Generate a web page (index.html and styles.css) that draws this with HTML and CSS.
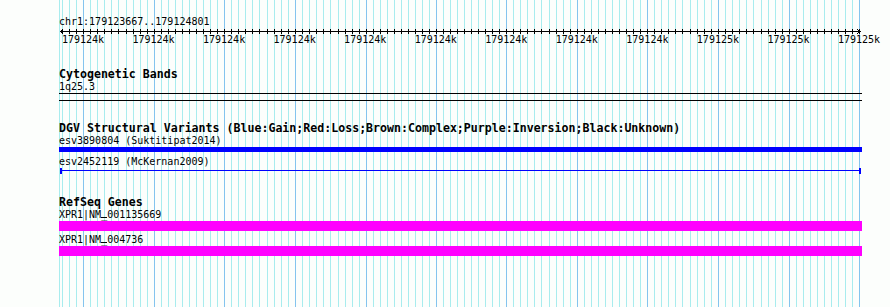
FILE: index.html
```html
<!DOCTYPE html>
<html>
<head>
<meta charset="utf-8">
<link rel="stylesheet" href="styles.css">
</head>
<body>
<div class="panel">
  <svg class="grid" width="890" height="307" viewBox="0 0 890 307" shape-rendering="crispEdges">
    <path class="grid-minor" d="M59.5 0V307M62.5 0V307M69.5 0V307M76.5 0V307M90.5 0V307M97.5 0V307M104.5 0V307M111.5 0V307M118.5 0V307M126.5 0V307M133.5 0V307M140.5 0V307M147.5 0V307M161.5 0V307M168.5 0V307M175.5 0V307M182.5 0V307M189.5 0V307M196.5 0V307M203.5 0V307M210.5 0V307M217.5 0V307M231.5 0V307M238.5 0V307M245.5 0V307M252.5 0V307M259.5 0V307M267.5 0V307M274.5 0V307M281.5 0V307M288.5 0V307M302.5 0V307M309.5 0V307M316.5 0V307M323.5 0V307M330.5 0V307M338.5 0V307M345.5 0V307M352.5 0V307M359.5 0V307M373.5 0V307M380.5 0V307M387.5 0V307M394.5 0V307M401.5 0V307M408.5 0V307M415.5 0V307M422.5 0V307M429.5 0V307M443.5 0V307M450.5 0V307M457.5 0V307M464.5 0V307M471.5 0V307M478.5 0V307M485.5 0V307M492.5 0V307M499.5 0V307M513.5 0V307M520.5 0V307M527.5 0V307M534.5 0V307M541.5 0V307M549.5 0V307M556.5 0V307M563.5 0V307M570.5 0V307M584.5 0V307M591.5 0V307M598.5 0V307M605.5 0V307M612.5 0V307M619.5 0V307M626.5 0V307M633.5 0V307M640.5 0V307M654.5 0V307M661.5 0V307M668.5 0V307M675.5 0V307M682.5 0V307M690.5 0V307M697.5 0V307M704.5 0V307M711.5 0V307M725.5 0V307M732.5 0V307M739.5 0V307M746.5 0V307M753.5 0V307M761.5 0V307M768.5 0V307M775.5 0V307M782.5 0V307M796.5 0V307M803.5 0V307M810.5 0V307M817.5 0V307M824.5 0V307M831.5 0V307M838.5 0V307M845.5 0V307M852.5 0V307"/>
    <path class="grid-major" d="M83.5 0V307M154.5 0V307M224.5 0V307M295.5 0V307M366.5 0V307M436.5 0V307M506.5 0V307M577.5 0V307M647.5 0V307M718.5 0V307M789.5 0V307M859.5 0V307"/>
  </svg>

  <div class="tracks">
    <div class="text coord">chr1:179123667..179124801</div>
    <svg class="axis" width="804" height="6" viewBox="59 0 804 6" shape-rendering="crispEdges">
      <path class="axis-line" d="M60 3.5H861"/>
      <path class="axis-line" d="M60.5 3.5L63.5 1.5M60.5 3.5L63.5 5.5M860.5 3.5L857.5 1.5M860.5 3.5L857.5 5.5"/>
      <path class="axis-line" d="M62.5 1V6M69.5 1V6M76.5 1V6M83.5 1V6M90.5 1V6M97.5 1V6M104.5 1V6M111.5 1V6M118.5 1V6M126.5 1V6M133.5 1V6M140.5 1V6M147.5 1V6M154.5 1V6M161.5 1V6M168.5 1V6M175.5 1V6M182.5 1V6M189.5 1V6M196.5 1V6M203.5 1V6M210.5 1V6M217.5 1V6M224.5 1V6M231.5 1V6M238.5 1V6M245.5 1V6M252.5 1V6M259.5 1V6M267.5 1V6M274.5 1V6M281.5 1V6M288.5 1V6M295.5 1V6M302.5 1V6M309.5 1V6M316.5 1V6M323.5 1V6M330.5 1V6M338.5 1V6M345.5 1V6M352.5 1V6M359.5 1V6M366.5 1V6M373.5 1V6M380.5 1V6M387.5 1V6M394.5 1V6M401.5 1V6M408.5 1V6M415.5 1V6M422.5 1V6M429.5 1V6M436.5 1V6M443.5 1V6M450.5 1V6M457.5 1V6M464.5 1V6M471.5 1V6M478.5 1V6M485.5 1V6M492.5 1V6M499.5 1V6M506.5 1V6M513.5 1V6M520.5 1V6M527.5 1V6M534.5 1V6M541.5 1V6M549.5 1V6M556.5 1V6M563.5 1V6M570.5 1V6M577.5 1V6M584.5 1V6M591.5 1V6M598.5 1V6M605.5 1V6M612.5 1V6M619.5 1V6M626.5 1V6M633.5 1V6M640.5 1V6M647.5 1V6M654.5 1V6M661.5 1V6M668.5 1V6M675.5 1V6M682.5 1V6M690.5 1V6M697.5 1V6M704.5 1V6M711.5 1V6M718.5 1V6M725.5 1V6M732.5 1V6M739.5 1V6M746.5 1V6M753.5 1V6M761.5 1V6M768.5 1V6M775.5 1V6M782.5 1V6M789.5 1V6M796.5 1V6M803.5 1V6M810.5 1V6M817.5 1V6M824.5 1V6M831.5 1V6M838.5 1V6M845.5 1V6M852.5 1V6M859.5 1V6"/>
    </svg>
    <div class="ticks">
      <span class="tick">179124k</span><span class="tick">179124k</span><span class="tick">179124k</span><span class="tick">179124k</span><span class="tick">179124k</span><span class="tick">179124k</span><span class="tick">179124k</span><span class="tick">179124k</span><span class="tick">179124k</span><span class="tick">179125k</span><span class="tick">179125k</span><span class="tick">179125k</span>
    </div>

    <div class="title title-cyto">Cytogenetic Bands</div>
    <div class="text">1q25.3</div>
    <div class="cytoband"></div>

    <div class="title title-dgv">DGV Structural Variants (Blue:Gain;Red:Loss;Brown:Complex;Purple:Inversion;Black:Unknown)</div>
    <div class="text">esv3890804 (Suktitipat2014)</div>
    <div class="bar bar-gain"></div>
    <div class="text text-gap">esv2452119 (McKernan2009)</div>
    <div class="span-line"></div>

    <div class="title title-refseq">RefSeq Genes</div>
    <div class="text">XPR1|NM<span class="us">_</span>001135669</div>
    <div class="bar bar-gene"></div>
    <div class="text text-gap-sm">XPR1|NM<span class="us">_</span>004736</div>
    <div class="bar bar-gene"></div>
  </div>
</div>
</body>
</html>
```

FILE: styles.css
```css
html, body {
  margin: 0;
  padding: 0;
  background: #fcfefc;
}

body {
  font-family: "DejaVu Sans Mono", "Liberation Mono", monospace;
  color: #000;
}

.panel {
  position: relative;
  width: 890px;
  height: 307px;
  overflow: hidden;
}

.grid {
  position: absolute;
  left: 0;
  top: 0;
}

.grid-minor {
  stroke: #a8ecee;
  stroke-width: 1;
  fill: none;
}

.grid-major {
  stroke: #84c4ee;
  stroke-width: 1;
  fill: none;
}

.tracks {
  position: relative;
  display: flex;
  flex-direction: column;
  align-items: flex-start;
  padding: 16px 0 0 59px;
}

.text {
  font-size: 10px;
  line-height: 11px;
  height: 11px;
  white-space: nowrap;
}

.coord {
  line-height: 12px;
  height: 12px;
}

.us {
  background: linear-gradient(#000, #000) 0 8px / 100% 1px no-repeat;
}

.axis {
  display: block;
}

.axis-line {
  stroke: #000;
  stroke-width: 1;
  fill: none;
}

.ticks {
  display: flex;
  margin-left: -11.27px;
  height: 11px;
}

.tick {
  flex: none;
  width: 70.55px;
  text-align: center;
  font-size: 10px;
  line-height: 11px;
  white-space: nowrap;
}

.title {
  font-weight: bold;
  font-size: 11.6px;
  line-height: 14px;
  height: 14px;
  white-space: nowrap;
}

.title-cyto {
  margin-top: 22px;
}

.title-dgv {
  margin-top: 20px;
}

.title-refseq {
  margin-top: 21px;
}

.cytoband {
  margin-top: 1px;
  width: 803px;
  height: 6px;
  border-top: 1px solid #000;
  border-bottom: 1px solid #000;
}

.bar {
  margin-top: 1px;
  width: 803px;
}

.bar-gain {
  height: 5px;
  background: #0000ff;
}

.bar-gene {
  height: 10px;
  background: #ff00ff;
}

.text-gap {
  margin-top: 4px;
}

.text-gap-sm {
  margin-top: 3px;
}

.span-line {
  margin-top: 1px;
  margin-left: 1px;
  width: 797px;
  height: 6px;
  border-left: 2px solid #0000ff;
  border-right: 2px solid #0000ff;
  background: linear-gradient(#0000ff, #0000ff) 0 2px / 100% 1px no-repeat;
}
```
